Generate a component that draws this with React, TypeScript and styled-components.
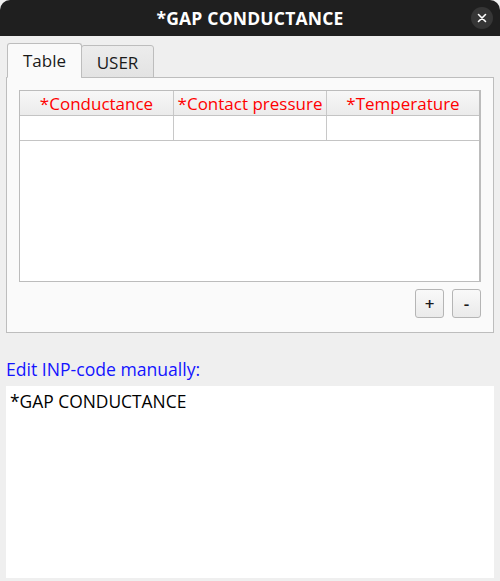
import React from 'react';
import styled, { createGlobalStyle } from 'styled-components';

const GlobalStyle = createGlobalStyle`
    html, body {
        margin: 0;
        padding: 0;
        background: #efefef;
    }
    body {
        font-family: "Open Sans", "Noto Sans", sans-serif;
        font-size: 17px;
        color: #000;
    }
`;

const Window = styled.div`
    display: flex;
    flex-direction: column;
    width: 500px;
    height: 581px;
    background: #efefef;
`;

const TitleBar = styled.div`
    position: relative;
    height: 36px;
    flex: none;
    background: #1f1f1f;
    border-radius: 10px 10px 0 0;
    display: flex;
    align-items: center;
    justify-content: center;
`;

const Title = styled.div`
    color: #ffffff;
    font-weight: 700;
    font-size: 17.5px;
    letter-spacing: 0.2px;
`;

const CloseButton = styled.div`
    position: absolute;
    right: 7px;
    top: 7px;
    width: 22px;
    height: 22px;
    border-radius: 50%;
    background: #363636;
    display: flex;
    align-items: center;
    justify-content: center;
`;

const Body = styled.div`
    flex: 1;
    display: flex;
    flex-direction: column;
    padding: 7px 6px 3px 6px;
    min-height: 0;
`;

const TabBar = styled.div`
    display: flex;
    align-items: flex-end;
    padding-left: 1px;
    height: 35px;
    margin-bottom: -1px;
    position: relative;
    z-index: 1;
`;

const Tab = styled.div<{ $active?: boolean }>`
    box-sizing: border-box;
    width: ${p => (p.$active ? 75 : 73)}px;
    height: ${p => (p.$active ? 35 : 33)}px;
    border: 1px solid #bdbdbd;
    border-bottom: ${p => (p.$active ? '1px solid #fafafa' : '1px solid #bdbdbd')};
    border-radius: 3px 3px 0 0;
    background: ${p => (p.$active ? '#fafafa' : 'linear-gradient(#ececec, #e3e3e3)')};
    margin-left: ${p => (p.$active ? 0 : -1)}px;
    display: flex;
    align-items: center;
    justify-content: center;
    padding-top: ${p => (p.$active ? 0 : 2)}px;
    font-size: 17px;
    color: #1a1a1a;
`;

const Panel = styled.div`
    flex: none;
    height: 256px;
    box-sizing: border-box;
    border: 1px solid #bdbdbd;
    background: #fafafa;
    padding: 12px 12px 14px 12px;
    display: flex;
    flex-direction: column;
    gap: 7px;
`;

const Table = styled.div`
    flex: 1;
    border: 1px solid #bcbcbc;
    border-right-width: 2px;
    background: #ffffff;
    display: flex;
    flex-direction: column;
`;

const Row = styled.div<{ $header?: boolean }>`
    display: grid;
    grid-template-columns: 154px 153px 1fr;
    height: 24px;
    border-bottom: 1px solid #c4c4c4;
    background: ${p => (p.$header ? 'linear-gradient(#f7f7f7, #ebebeb)' : '#ffffff')};
`;

const Cell = styled.div<{ $header?: boolean }>`
    border-right: 1px solid #c8c8c8;
    display: flex;
    align-items: center;
    justify-content: center;
    color: ${p => (p.$header ? '#ff0000' : '#000')};
    font-size: 17px;
    white-space: nowrap;
    overflow: hidden;
    &:last-child {
        border-right: none;
    }
`;

const ButtonRow = styled.div`
    display: flex;
    justify-content: flex-end;
    gap: 8px;
`;

const SmallButton = styled.div`
    box-sizing: border-box;
    width: 29px;
    height: 29px;
    border: 1px solid #b5b5b5;
    border-radius: 3px;
    background: linear-gradient(#f9f9f9, #eaeaea);
    display: flex;
    align-items: center;
    justify-content: center;
    font-size: 17px;
    font-weight: 600;
    color: #1a1a1a;
`;

const Label = styled.div`
    margin-top: 26px;
    margin-bottom: 6px;
    line-height: 21px;
    color: #1414ff;
    font-size: 17.6px;
`;

const Editor = styled.div`
    flex: 1;
    background: #ffffff;
    padding: 4px 4px;
    font-size: 17.4px;
    line-height: 22px;
    color: #000;
`;

const columns = ['*Conductance', '*Contact pressure', '*Temperature'];

export default function App() {
    return (
        <Window>
            <GlobalStyle />
            <TitleBar>
                <Title>*GAP CONDUCTANCE</Title>
                <CloseButton>
                    <svg width="10" height="10" viewBox="0 0 10 10">
                        <path d="M1.5 1.5 L8.5 8.5 M8.5 1.5 L1.5 8.5" stroke="#ffffff" strokeWidth="1.6" strokeLinecap="round" />
                    </svg>
                </CloseButton>
            </TitleBar>
            <Body>
                <TabBar>
                    <Tab $active>Table</Tab>
                    <Tab>USER</Tab>
                </TabBar>
                <Panel>
                    <Table>
                        <Row $header>
                            {columns.map(c => (
                                <Cell key={c} $header>{c}</Cell>
                            ))}
                        </Row>
                        <Row>
                            {columns.map(c => (
                                <Cell key={c} />
                            ))}
                        </Row>
                    </Table>
                    <ButtonRow>
                        <SmallButton>+</SmallButton>
                        <SmallButton>-</SmallButton>
                    </ButtonRow>
                </Panel>
                <Label>Edit INP-code manually:</Label>
                <Editor>*GAP CONDUCTANCE</Editor>
            </Body>
        </Window>
    );
}
